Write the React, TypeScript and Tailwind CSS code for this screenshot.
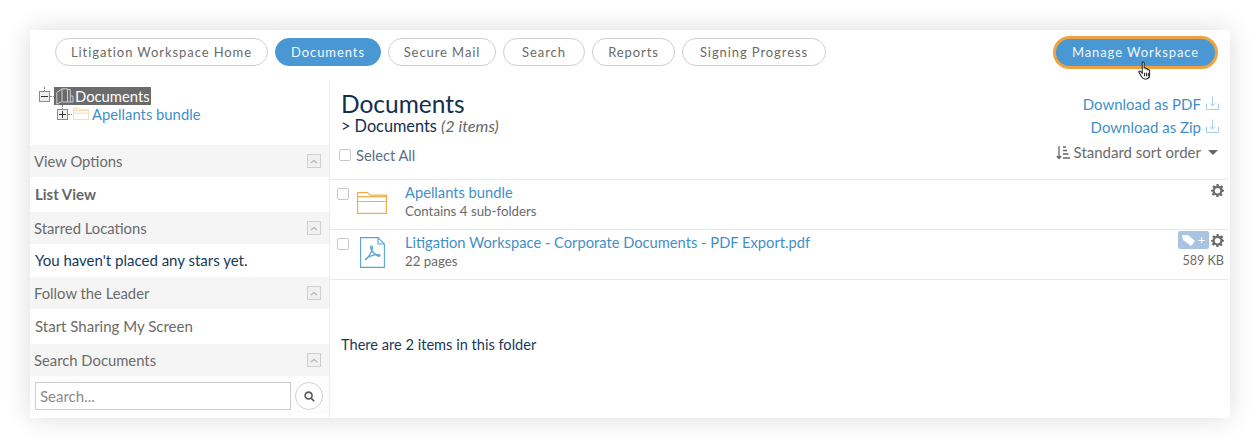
import React from "react";

const font = "[font-family:Lato,'Noto_Sans',sans-serif]";

function Pill({ label, active, w }: { label: string; active?: boolean; w: string }) {
  return (
    <div
      className={
        "h-[28px] pt-[2px] rounded-full flex items-center justify-center text-[13px] tracking-[0.92px] border " +
        w + " " +
        (active ? "bg-[#4a98d3] border-[#4a98d3] text-[#f2f7fb]" : "bg-white border-[#cfcfcf] text-[#6a6a6a]")
      }
    >
      {label}
    </div>
  );
}

function Collapse() {
  return (
    <div className="w-[14px] h-[14px] border border-[#cfcfcf] bg-[#f0f0f0] flex items-center justify-center">
      <svg width="8" height="5" viewBox="0 0 8 5" fill="none" stroke="#b5b5b5" strokeWidth="1.2">
        <path d="M1 4 L4 1.5 L7 4" />
      </svg>
    </div>
  );
}

function SectionHead({ label }: { label: string }) {
  return (
    <div className="h-[32px] bg-[#f5f5f5] flex items-center justify-between pl-[4px] pr-[8px] text-[14.8px] text-[#6b6b6b]">
      <span>{label}</span>
      <Collapse />
    </div>
  );
}

function Gear() {
  return (
    <svg width="13" height="13" viewBox="0 0 24 24" fill="#6e6e6e">
      <path
        fillRule="evenodd"
        d="M10 0h4l.7 3.4 2.2.9 2.9-1.9 2.8 2.8-1.9 2.9.9 2.2L24 11v3l-3.4.7-.9 2.2 1.9 2.9-2.8 2.8-2.9-1.9-2.2.9L14 24h-4l-.7-3.4-2.2-.9-2.9 1.9-2.8-2.8 1.9-2.9-.9-2.2L0 14v-3l3.4-.7.9-2.2L2.4 5.2l2.8-2.8 2.9 1.9 2.2-.9L10 0zm2 7.500a5 5 0 1 0 0 10 5 5 0 0 0 0-10z"
      />
    </svg>
  );
}

function Checkbox() {
  return <div className="w-[12px] h-[12px] rounded-[2px] border border-[#c8c8c8] bg-white shrink-0" />;
}

function DownloadIcon() {
  return (
    <svg className="-mt-[3px]" width="13" height="14" viewBox="0 0 13 14" fill="none" stroke="#a9cde9" strokeWidth="1">
      <path d="M.5 7.500v6h12v-6M6.500 .5v9.500M3.800 7.300l2.700 2.700 2.700-2.700" />
    </svg>
  );
}

function FolderIcon({ w, h, stroke }: { w: number; h: number; stroke: string }) {
  return (
    <svg width={w} height={h} viewBox="0 0 30 22" fill="none" stroke={stroke} strokeWidth="1.2">
      <path d="M.6 21.400V.6h10l2.500 2.600h16.300v18.200z" />
      <path d="M.6 9.500h28.800M.6 4.600h28.800" />
    </svg>
  );
}

function PdfIcon() {
  return (
    <svg width="25" height="31" viewBox="0 0 25 31" fill="none" stroke="#5aa3d8" strokeWidth="1.1">
      <path d="M.6.6h17.400l6.400 6.400v23.400H.6z" />
      <path d="M18 .6V7h6.400" />
      <path d="M5.500 22.600c1.600-1 5.500-5.500 6.700-10.300.6-2.800-.6-3.800-1.400-2.800-.7 1.200.9 6 6.700 9.400 1.400.7 2.800.2 2.500-.6-.4-1-4.700-1-9.600.9-3.300 1.300-5.600 3.400-4.900 3.400z" strokeWidth="1.3" />
    </svg>
  );
}

function BookIcon() {
  return (
    <svg width="18" height="17" viewBox="0 0 18 17" fill="none" stroke="#cfcfcf" strokeWidth="1">
      <path d="M.8 16V4.500L6 .8V13.500L.8 16zM6 .8h5.500V14H6M11.500 1.500h2.800V14H11.500M14.300 8H17V14H14.300" />
    </svg>
  );
}

function TreeToggle({ minus }: { minus?: boolean }) {
  return (
    <div className="relative w-[11px] h-[11px] border border-[#8a8a8a] bg-[#efefef] flex items-center justify-center shrink-0">
      <div className="absolute w-[7px] h-[1px] bg-[#333]" />
      {!minus && <div className="absolute w-[1px] h-[7px] bg-[#333]" />}
      <div className="absolute top-[-5px] left-[4px] h-[4px] border-l border-dotted border-[#888]" />
      <div className="absolute right-[-5px] top-[4px] w-[4px] border-t border-dotted border-[#888]" />
    </div>
  );
}

function HandCursor() {
  return (
    <svg className="absolute left-[85px] top-[25px]" width="15" height="19" viewBox="0 0 16 20" fill="#fff" stroke="#222" strokeWidth="1.1">
      <path d="M4.500 1.800c0-1.300 2-1.300 2 0v6c.1-1 1.900-1 2 0v1c.1-1 1.900-1 2 0v1c.1-.8 1.800-.8 1.900.2v4.500c0 2-1.100 4-3.100 4.500H7c-1.500 0-2.300-.8-3-2L1 12c-.6-1.200.8-2 1.700-1.100l1.800 2z" />
      <path d="M7 12.500v3.500M9 12.500v3.500M11 12.500v3.500" />
    </svg>
  );
}

export default function App() {
  return (
    <div className={"w-[1260px] h-[448px] bg-white p-[30px] overflow-hidden " + font}>
      <div className="w-[1200px] h-[388px] bg-white shadow-[0_0_24px_rgba(0,0,0,0.14)] flex flex-col">
        <div className="h-[50px] flex items-center justify-between pl-[25px] pr-[12px] pb-[6px] shrink-0">
          <div className="flex gap-[7px]">
            <Pill w="w-[213px]" label="Litigation Workspace Home" />
            <Pill w="w-[106px]" label="Documents" active />
            <Pill w="w-[108px]" label="Secure Mail" />
            <Pill w="w-[82px]" label="Search" />
            <Pill w="w-[83px]" label="Reports" />
            <Pill w="w-[144px]" label="Signing Progress" />
          </div>
          <div className="relative">
            <div className="h-[33px] w-[165px] pt-[2px] rounded-full bg-[#4a98d3] border-[3px] border-[#eea243] text-[#eef6fb] text-[13px] tracking-[0.92px] flex items-center justify-center">
              Manage Workspace
            </div>
            <HandCursor />
          </div>
        </div>

        <div className="flex flex-1 min-h-0">
          <div className="w-[300px] shrink-0 border-r border-[#ececf2] flex flex-col">
            <div className="h-[65px] pt-[7px] pl-[9px] text-[14.8px]">
              <div className="flex items-center h-[18px]">
                <TreeToggle minus />
                <div className="ml-[4px] bg-[#6b6b6b] text-white h-[18px] w-[97px] flex items-center pl-[2px] gap-[1px]">
                  <BookIcon />
                  <span>Documents</span>
                </div>
              </div>
              <div className="flex items-center h-[18px] ml-[18px] text-[#3f8fca]">
                <TreeToggle />
                <div className="ml-[5px] mr-[3px] flex"><FolderIcon w={16} h={12} stroke="#f6c58a" /></div>
                <span>Apellants bundle</span>
              </div>
            </div>
            <SectionHead label="View Options" />
            <div className="h-[35px] flex items-center pl-[5px] text-[15px] font-bold text-[#666]">List View</div>
            <SectionHead label="Starred Locations" />
            <div className="h-[33px] flex items-center pl-[5px] text-[15px] text-[#17395c]">You haven't placed any stars yet.</div>
            <SectionHead label="Follow the Leader" />
            <div className="h-[35px] flex items-center pl-[5px] pb-[1px] text-[15px] text-[#6b6b6b]">Start Sharing My Screen</div>
            <SectionHead label="Search Documents" />
            <div className="h-[38px] bg-[#fdfdfd] flex items-start pl-[5px] pr-[6px] gap-[4px] pt-[6px]">
              <div className="w-[256px] h-[28px] border border-[#cdcdcd] bg-white flex items-center pl-[4px] text-[15px] text-[#8a8a8a]">Search...</div>
              <div className="w-[28px] h-[28px] rounded-full border border-[#d5d5d5] flex items-center justify-center">
                <svg width="11" height="11" viewBox="0 0 12 12" fill="none" stroke="#555" strokeWidth="1.7">
                  <circle cx="5" cy="5" r="3.8" />
                  <path d="M8 8l3.200 3.200" />
                </svg>
              </div>
            </div>
          </div>

          <div className="flex-1 min-w-0 flex flex-col">
            <div className="h-[100px] flex justify-between pl-[11px] pr-[9px] mr-[2px] shrink-0 border-b border-[#e8e8e8]">
              <div className="pt-[10px]">
                <div className="text-[24.5px] leading-[28px] text-[#122f4f]">Documents</div>
                <div className="text-[16.3px] leading-[16px] text-[#122f4f]">
                  &gt; Documents <i className="text-[#666]">(2 items)</i>
                </div>
                <div className="flex items-center gap-[5px] mt-[11px] h-[20px] text-[14.7px] text-[#5b6f85] -ml-[2px]">
                  <Checkbox />
                  <span>Select All</span>
                </div>
              </div>
              <div className="flex flex-col items-end pt-[14px] text-[15px]">
                <div className="flex items-center gap-[5px] text-[#3f8fca] h-[20px]">Download as PDF <DownloadIcon /></div>
                <div className="flex items-center gap-[5px] text-[#3f8fca] h-[20px] mt-[3px]">Download as Zip <DownloadIcon /></div>
                <div className="flex items-center text-[#6b6b6b] h-[20px] mt-[5px] gap-[3px]">
                  <svg width="15" height="15" viewBox="0 0 15 15" fill="none" stroke="#666" strokeWidth="1.3">
                    <path d="M3 1v12.500M.8 11l2.200 2.500L5.200 11M7 2h3M7 5.500h4M7 9h5.500M7 13h7" />
                  </svg>
                  <span>Standard sort order</span>
                  <svg className="ml-[4px] mr-[1px]" width="10" height="5" viewBox="0 0 10 5" fill="#666"><path d="M0 0h10L5 5z" /></svg>
                </div>
              </div>
            </div>

            <div className="h-[50px] flex pl-[7px] mr-[2px] border-b border-[#e8e8e8] shrink-0">
              <div className="pt-[8px]"><Checkbox /></div>
              <div className="w-[56px] pl-[8px] pt-[12px]"><FolderIcon w={30} h={22} stroke="#f0ae53" /></div>
              <div className="pt-[2px]">
                <div className="text-[14.7px] leading-[20px] text-[#3f8fca]">Apellants bundle</div>
                <div className="text-[13.3px] leading-[19px] text-[#6b6b6b]">Contains 4 sub-folders</div>
              </div>
              <div className="ml-auto pt-[4px] pr-[4px]"><Gear /></div>
            </div>

            <div className="h-[50px] flex pl-[7px] mr-[2px] border-b border-[#e8e8e8] shrink-0">
              <div className="pt-[8px]"><Checkbox /></div>
              <div className="w-[56px] pl-[11px] pt-[7px]"><PdfIcon /></div>
              <div className="pt-[2px]">
                <div className="text-[14.7px] leading-[20px] text-[#3f8fca]">Litigation Workspace - Corporate Documents - PDF Export.pdf</div>
                <div className="text-[13.3px] leading-[19px] text-[#6b6b6b]">22 pages</div>
              </div>
              <div className="ml-auto pt-[1px] pr-[4px] flex flex-col items-end">
                <div className="flex items-center gap-[2px]">
                  <div className="w-[31px] h-[18px] rounded-[2px] bg-[#a9c3e0] flex items-center justify-center gap-[3px]">
                    <svg width="13" height="11" viewBox="0 0 13 11" fill="#fff"><path d="M0 0h6l7 6-4 5-8-6z" /></svg>
                    <span className="text-white text-[12px] leading-none">+</span>
                  </div>
                  <Gear />
                </div>
                <div className="text-[12.6px] leading-[18px] text-[#6b6b6b] mt-[3px]">589 KB</div>
              </div>
            </div>

            <div className="pl-[11px] pt-[55px] text-[14.6px] leading-[20px] text-[#17395c]">There are 2 items in this folder</div>
          </div>
        </div>
      </div>
    </div>
  );
}
